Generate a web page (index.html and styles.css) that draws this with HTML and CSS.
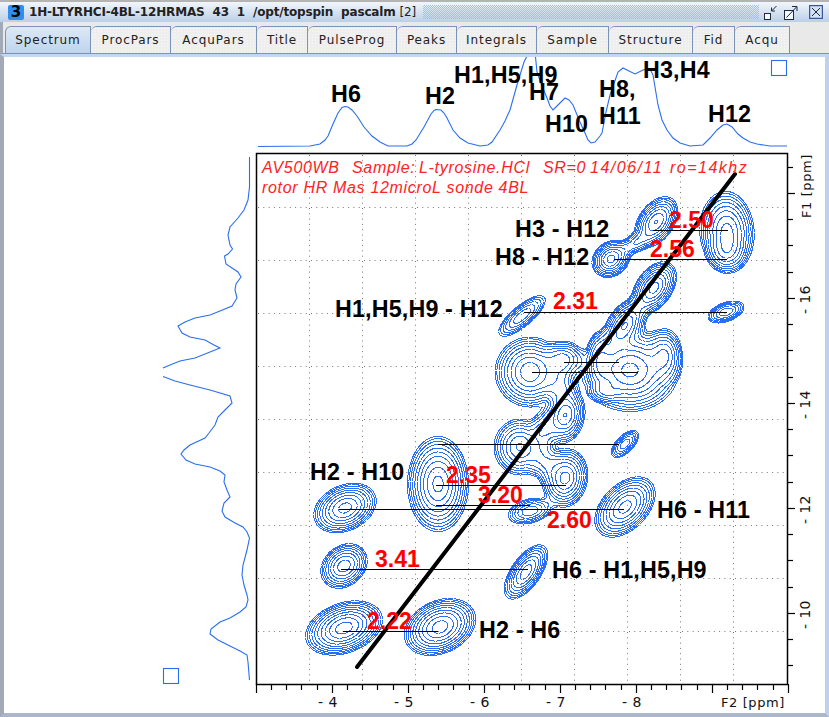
FILE: index.html
```html
<!DOCTYPE html>
<html>
<head>
	<title>TopSpin spectrum</title>
	<link rel="stylesheet" href="styles.css">
	<script src="plot.js" defer></script>
</head>
<body>
<div class="window">
	<div class="titlebar">
		<span class="appicon">3</span>
		<span class="wintitle">1H-LTYRHCI-4BL-12HRMAS  43  1  /opt/topspin  pascalm <span class="winnum">[2]</span></span>
		<span class="grip"></span>
		<svg class="winbtn" width="15" height="15" viewBox="0 0 15 15">
			<rect class="btnbox" x="1.5" y="8.5" width="6" height="6"/>
			<path class="btnline" d="M13.5 1L8.5 6M8.5 2.5V6H12"/>
		</svg>
		<svg class="winbtn" width="15" height="15" viewBox="0 0 15 15">
			<rect class="btnbox" x="1.5" y="5.5" width="9" height="9"/>
			<path class="btnline" d="M3.5 12.5L13.5 2M9 1.5H14V6"/>
		</svg>
		<svg class="closebtn" width="14" height="14" viewBox="0 0 14 14">
			<rect class="closebox" x="0.5" y="0.5" width="13" height="13"/>
			<path class="btnline" d="M3 3L11 11M11 3L3 11"/>
		</svg>
	</div>
	<div class="tabs">
		<div class="tab active t-spectrum">Spectrum</div>
		<div class="tab t-proc">ProcPars</div>
		<div class="tab t-acqu">AcquPars</div>
		<div class="tab t-title">Title</div>
		<div class="tab t-pulse">PulseProg</div>
		<div class="tab t-peaks">Peaks</div>
		<div class="tab t-proc">Integrals</div>
		<div class="tab t-sample">Sample</div>
		<div class="tab t-struct">Structure</div>
		<div class="tab t-fid">Fid</div>
		<div class="tab t-acq">Acqu</div>
	</div>
	<div class="panel">
		<svg id="plot" class="plot" width="821" height="656" viewBox="4 57 821 656">
			<defs>
				<clipPath id="frameclip"><rect x="257" y="154" width="530" height="530"/></clipPath>
			</defs>

			<!-- 1D projections -->
			<polyline class="trace" points="258,146.5 310,146 320,144 325,140 328,136 333,124 338,113 342,107.5 345,106.5 348,107 352,110 357,116 364,127 372,136 380,142 388,146 407,146 412,144 416,140 424,127 431,114 434,110.5 436,109.5 441,110 444,113 447,118 453,130 460,138 468,143 480,146 488,145 492,142 500,130 505,121 510,110 517,85 524,62 530,50 535,52 537,72 542,86 547,98 550,106 553,110 557,106 560,103 565,98 569,100 573,105 580,122 585,133 588,140 591,143 595,142 600,136 602,133 606,112 610,95 618,72 623,68 629,71 635,74 643,70 650,69 653,75 658,105 662,120 667,130 673,138 680,143 690,146 703,145 710,138 717,130 723,125 727,124 732,127 738,134 743,138 750,142 757,144 770,146 787,146"/>
			<polyline class="trace" points="249.5,157 249.5,187 248,200 244,210 238,218 230,227 228,235 230,245 232.5,249 228,254 224.5,256 226,264 232,268 238,272 241,277 236,284 235,290 237,298 232,306 220,311 210,315 195,318 185,322 178,326 182,333 190,337 205,340 214,345 220,348 210,352 195,358 180,361 170,365 163,368"/>
			<polyline class="trace" points="163,376.5 175,381 190,385 210,390 230,396 232,403 225,410 218,417 215,425 209,433 205,438 190,445 184,450 181,454 186,460 195,464 210,467 220,471 225,475 224,482 227,490 230,497 224,503 222,511 225,517 235,523 243,527 247,532 249.5,538 247,550 243,565 242,575 244,585 247,595 248,600 246,607 240,612 230,618 220,622 211,629 210,634 218,640 230,646 240,651 247,655 248,662 249.5,680"/>
			<rect class="trace" x="771.5" y="60.5" width="15" height="15"/>
			<rect class="trace" x="163.5" y="668.5" width="15" height="15"/>

			<g id="grid"></g>
			<g id="contours" clip-path="url(#frameclip)"></g>
			<g id="ticks"></g>
			<rect class="frame" x="256.5" y="153.5" width="531" height="531"/>

			<!-- assignment lines -->
			<path class="assign" d="M653 230.5H728M614 259.5H727M524 312.5H727M564 362.5H619M532 372.5H638M438 444.5H619M436 485.5H566M436 505.5H530M339 509.5H624M341 569.5H528M343 631.5H438"/>
			<line class="diagonal" x1="357" y1="667" x2="735" y2="174"/>

			<!-- axis numbers -->
			<text class="axis" x="318" y="707">- 4</text>
			<text class="axis" x="394" y="707">- 5</text>
			<text class="axis" x="470" y="707">- 6</text>
			<text class="axis" x="546" y="707">- 7</text>
			<text class="axis" x="622" y="707">- 8</text>
			<text class="axis axis-unit" x="721" y="707">F2 [ppm]</text>
			<text class="axis" transform="translate(810,314) rotate(-90)">- 16</text>
			<text class="axis" transform="translate(810,419) rotate(-90)">- 14</text>
			<text class="axis" transform="translate(810,524) rotate(-90)">- 12</text>
			<text class="axis" transform="translate(810,629) rotate(-90)">- 10</text>
			<text class="axis axis-unit" transform="translate(811,218) rotate(-90)">F1 [ppm]</text>

			<!-- sample annotation -->
			<text class="note" y="173"><tspan x="262">AV500WB</tspan><tspan x="352">Sample:</tspan><tspan x="419">L-tyrosine.HCl</tspan><tspan x="543">SR=0</tspan><tspan class="note-wide" x="590">14/06/11</tspan><tspan class="note-wide" x="670">ro=14khz</tspan></text>
			<text class="note" x="262" y="193">rotor HR Mas 12microL sonde 4BL</text>

			<!-- proton labels -->
			<text class="lab" x="331" y="102">H6</text>
			<text class="lab" x="425" y="104">H2</text>
			<text class="lab" x="454" y="83">H1,H5,H9</text>
			<text class="lab" x="529" y="100">H7</text>
			<text class="lab" x="545" y="132">H10</text>
			<text class="lab" x="599" y="97">H8,</text>
			<text class="lab" x="599" y="124">H11</text>
			<text class="lab" x="643" y="78">H3,H4</text>
			<text class="lab" x="708" y="122">H12</text>

			<text class="lab" x="515" y="237">H3 - H12</text>
			<text class="lab" x="495" y="265">H8 - H12</text>
			<text class="lab" x="335" y="317">H1,H5,H9 - H12</text>
			<text class="lab" x="310" y="480">H2 - H10</text>
			<text class="lab" x="657" y="518">H6 - H11</text>
			<text class="lab" x="552" y="578">H6 - H1,H5,H9</text>
			<text class="lab" x="479" y="638">H2 - H6</text>

			<!-- distances -->
			<text class="dist" x="669" y="228">2.50</text>
			<text class="dist" x="650" y="257">2.56</text>
			<text class="dist" x="553" y="309">2.31</text>
			<text class="dist" x="446" y="483">2.35</text>
			<text class="dist" x="478" y="503">3.20</text>
			<text class="dist" x="547" y="528">2.60</text>
			<text class="dist" x="375" y="567">3.41</text>
			<text class="dist" x="367" y="629">2.22</text>
		</svg>
	</div>
</div>
</body>
</html>
```

FILE: styles.css
```css
html, body {
	margin: 0;
	padding: 0;
	background: #fff;
}
.window {
	width: 829px;
	height: 717px;
	box-sizing: border-box;
	display: flex;
	flex-direction: column;
	overflow: hidden;
	background: #e9e9e9;
	border-top: 2px solid #b4b4b4;
}
.titlebar {
	height: 20px;
	flex: none;
	display: flex;
	align-items: center;
	padding: 0 6px 0 8px;
	background: linear-gradient(#f2f6fb, #d3e0f0 55%, #bccfe6);
	font: bold 12px "DejaVu Sans", sans-serif;
	color: #222;
}
.appicon {
	width: 16px;
	height: 15px;
	margin-right: 5px;
	background: #2f8ff0;
	border-radius: 2px;
	color: #000;
	font-size: 15px;
	line-height: 15px;
	text-align: center;
}
.wintitle {
	white-space: pre;
	letter-spacing: -0.18px;
}
.winnum {
	font-weight: normal;
}
.grip {
	flex: 1;
	height: 14px;
	margin: 0 4px 0 7px;
	background: repeating-conic-gradient(#a6c2ea 0 25%, transparent 0 50%) 0 0 / 2px 2px;
}
.winbtn {
	margin-right: 5px;
	flex: none;
}
.closebtn {
	margin-left: 6px;
	flex: none;
}
.btnbox {
	fill: #f4f8fc;
	stroke: #1c2a44;
}
.btnline {
	fill: none;
	stroke: #1c2a44;
	stroke-width: 1;
}
.closebox {
	fill: #d4e2f4;
	stroke: #3c5a94;
	stroke-width: 1.5;
}
.tabs {
	height: 32px;
	flex: none;
	display: flex;
	box-sizing: border-box;
	padding: 4px 0 0 2px;
	background: #e9e9e9;
	border-bottom: 1px solid #7c93b8;
	border-left: 3px solid #a2aab8;
}
.tab {
	box-sizing: border-box;
	height: 27px;
	border: 1px solid #7c93b8;
	border-left-width: 0;
	border-bottom: 0;
	border-top-left-radius: 6px;
	background-color: #eeeeee;
	background-image: radial-gradient(circle, #f8f8f8 0.6px, transparent 0.7px);
	background-size: 3px 3px;
	font: 12px/27px "DejaVu Sans", sans-serif;
	letter-spacing: 0.9px;
	text-align: center;
	color: #222;
}
.tab.active {
	border-left-width: 1px;
	background: linear-gradient(#dde9f6, #bdd5ec);
}
.t-spectrum { width: 86px; }
.t-proc { width: 80px; }
.t-acqu { width: 86px; }
.t-title { width: 51px; }
.t-pulse { width: 89px; }
.t-peaks { width: 60px; }
.t-sample { width: 72px; }
.t-struct { width: 84px; }
.t-fid { width: 42px; }
.t-acq { width: 55px; }
.panel {
	flex: 1;
	background: #fff;
	border-left: 4px solid #a2aab8;
	border-right: 4px solid #bcd2ec;
	border-top: 3px solid #c2d8f2;
	border-bottom: 4px solid #a9b7c9;
	overflow: hidden;
}
.plot {
	display: block;
}
.trace {
	fill: none;
	stroke: #2a6ef0;
	stroke-width: 1.1;
}
.frame {
	fill: none;
	stroke: #000;
	stroke-width: 1.5;
}
.gridline {
	stroke: #777;
	stroke-width: 1;
	stroke-dasharray: 1 4.3;
}
.tick {
	stroke: #000;
	stroke-width: 1.2;
}
.contour {
	fill: none;
	stroke: #2a6ef0;
	stroke-width: 1;
	shape-rendering: crispEdges;
}
.assign {
	fill: none;
	stroke: #000;
	stroke-width: 1;
}
.diagonal {
	stroke: #000;
	stroke-width: 4;
	stroke-linecap: round;
}
.axis {
	font: 14px "DejaVu Sans", sans-serif;
	word-spacing: 1px;
	fill: #111;
}
.axis-unit {
	font-size: 13px;
	letter-spacing: 0.6px;
	word-spacing: 0;
}
.note {
	font: italic 16px "Liberation Sans", sans-serif;
	letter-spacing: 0.68px;
	fill: #f22;
}
.note-wide {
	letter-spacing: 1.5px;
}
.lab {
	font: bold 23.3px "Liberation Sans", sans-serif;
	letter-spacing: 0.15px;
	fill: #000;
}
.dist {
	font: bold 23px "Liberation Sans", sans-serif;
	fill: #f00;
}
```

FILE: plot.js
```js
// grid, ticks and 2D contours of the spectrum
var NS = 'http://www.w3.org/2000/svg';

function line(parent, cls, x1, y1, x2, y2) {
	var el = document.createElementNS(NS, 'line');
	el.setAttribute('class', cls);
	el.setAttribute('x1', x1);
	el.setAttribute('y1', y1);
	el.setAttribute('x2', x2);
	el.setAttribute('y2', y2);
	parent.appendChild(el);
}

var grid = document.getElementById('grid');
var ticks = document.getElementById('ticks');
for (var i = 0; i < 9; i++) {
	line(grid, 'gridline', 309.5 + 53 * i, 155, 309.5 + 53 * i, 684);
	line(grid, 'gridline', 258, 207.5 + 53 * i, 787, 207.5 + 53 * i);
}
for (i = 0; i <= 35; i++) {
	var x = Math.round(331.7 + (i - 5) * 15.2) + 0.5;
	line(ticks, 'tick', x, 684, x, (i % 5 == 0) ? 693 : 690);
}
for (i = 0; i <= 19; i++) {
	var y = Math.round(166.5 + i * 26.25) + 0.5;
	line(ticks, 'tick', 787, y, (i % 4 == 1) ? 795 : 793, y);
}

// peaks: x, y, sigma long, sigma short, angle (deg), height
var peaks = [
	[727, 232, 12, 18, -4, 9],
	[726, 252, 10, 10, 0, 4],
	[656, 222, 13, 8, -55, 8],
	[611, 259, 9, 7.5, -40, 9],
	[634, 244, 12, 6, -30, 3],
	[654, 288, 13, 8, -55, 9],
	[625, 325, 14, 8, -55, 8],
	[726, 312, 11, 5.5, -20, 4],
	[522, 316, 17, 6, -40, 4],
	[530, 372, 15, 15, 0, 10],
	[564, 360, 11, 10, 0, 5],
	[560, 385, 11, 11, 0, 3],
	[630, 370, 20, 17, 0, 12],
	[665, 355, 9, 14, 0, 5],
	[600, 360, 7, 16, 0, 4],
	[605, 392, 10, 6, 0, 3],
	[565, 415, 9, 13, 10, 8],
	[520, 447, 13, 14, 0, 6],
	[545, 430, 9, 13, 0, 3],
	[545, 462, 10, 12, 0, 3],
	[625, 444, 10, 5, -45, 4],
	[565, 478, 10, 13, 10, 9],
	[530, 511, 13, 7, -15, 4],
	[438, 484, 12.5, 19.5, 0, 12],
	[625, 507, 16, 10, -45, 9],
	[345, 508, 14.5, 10, -25, 9],
	[344, 566, 12, 9.5, -40, 7],
	[526, 572, 15, 7, -55, 7],
	[344, 628, 16, 10, -20, 13],
	[440, 627, 15, 10.5, -25, 13]
];
peaks.forEach(function(p) {
	var a = p[4] * Math.PI / 180;
	p[6] = Math.cos(a);
	p[7] = Math.sin(a);
});

function field(x, y) {
	var sum = 0;
	for (var n = 0; n < peaks.length; n++) {
		var p = peaks[n];
		var dx = x - p[0], dy = y - p[1];
		var u = (dx * p[6] + dy * p[7]) / p[2];
		var v = (-dx * p[7] + dy * p[6]) / p[3];
		var g = p[5] * Math.exp(1 - Math.pow(1 + u * u + v * v, 0.65)) - 0.45;
		if (g > 0) sum += g;
	}
	return sum;
}

// marching squares on a 1.5px grid
var x0 = 290, y0 = 180, step = 1.5, nx = 330, ny = 330;
var values = [];
for (var r = 0; r <= ny; r++) {
	values[r] = [];
	for (var c = 0; c <= nx; c++) values[r][c] = field(x0 + c * step, y0 + r * step);
}

function cross(a, b, level) {
	return (level - a) / (b - a);
}

var d = [];
for (var level = 0.5, k = 0; k < 11; k++, level *= 1.4) {
	for (r = 0; r < ny; r++) {
		for (c = 0; c < nx; c++) {
			var a = values[r][c], b = values[r][c + 1], e = values[r + 1][c + 1], f = values[r + 1][c];
			var pts = [];
			var px = x0 + c * step, py = y0 + r * step;
			if ((a < level) != (b < level)) pts.push([px + cross(a, b, level) * step, py]);
			if ((b < level) != (e < level)) pts.push([px + step, py + cross(b, e, level) * step]);
			if ((f < level) != (e < level)) pts.push([px + cross(f, e, level) * step, py + step]);
			if ((a < level) != (f < level)) pts.push([px, py + cross(a, f, level) * step]);
			for (var m = 0; m + 1 < pts.length; m += 2) {
				d.push('M' + pts[m][0].toFixed(1) + ' ' + pts[m][1].toFixed(1) + 'L' + pts[m + 1][0].toFixed(1) + ' ' + pts[m + 1][1].toFixed(1));
			}
		}
	}
}
var path = document.createElementNS(NS, 'path');
path.setAttribute('class', 'contour');
path.setAttribute('d', d.join(''));
document.getElementById('contours').appendChild(path);
```
